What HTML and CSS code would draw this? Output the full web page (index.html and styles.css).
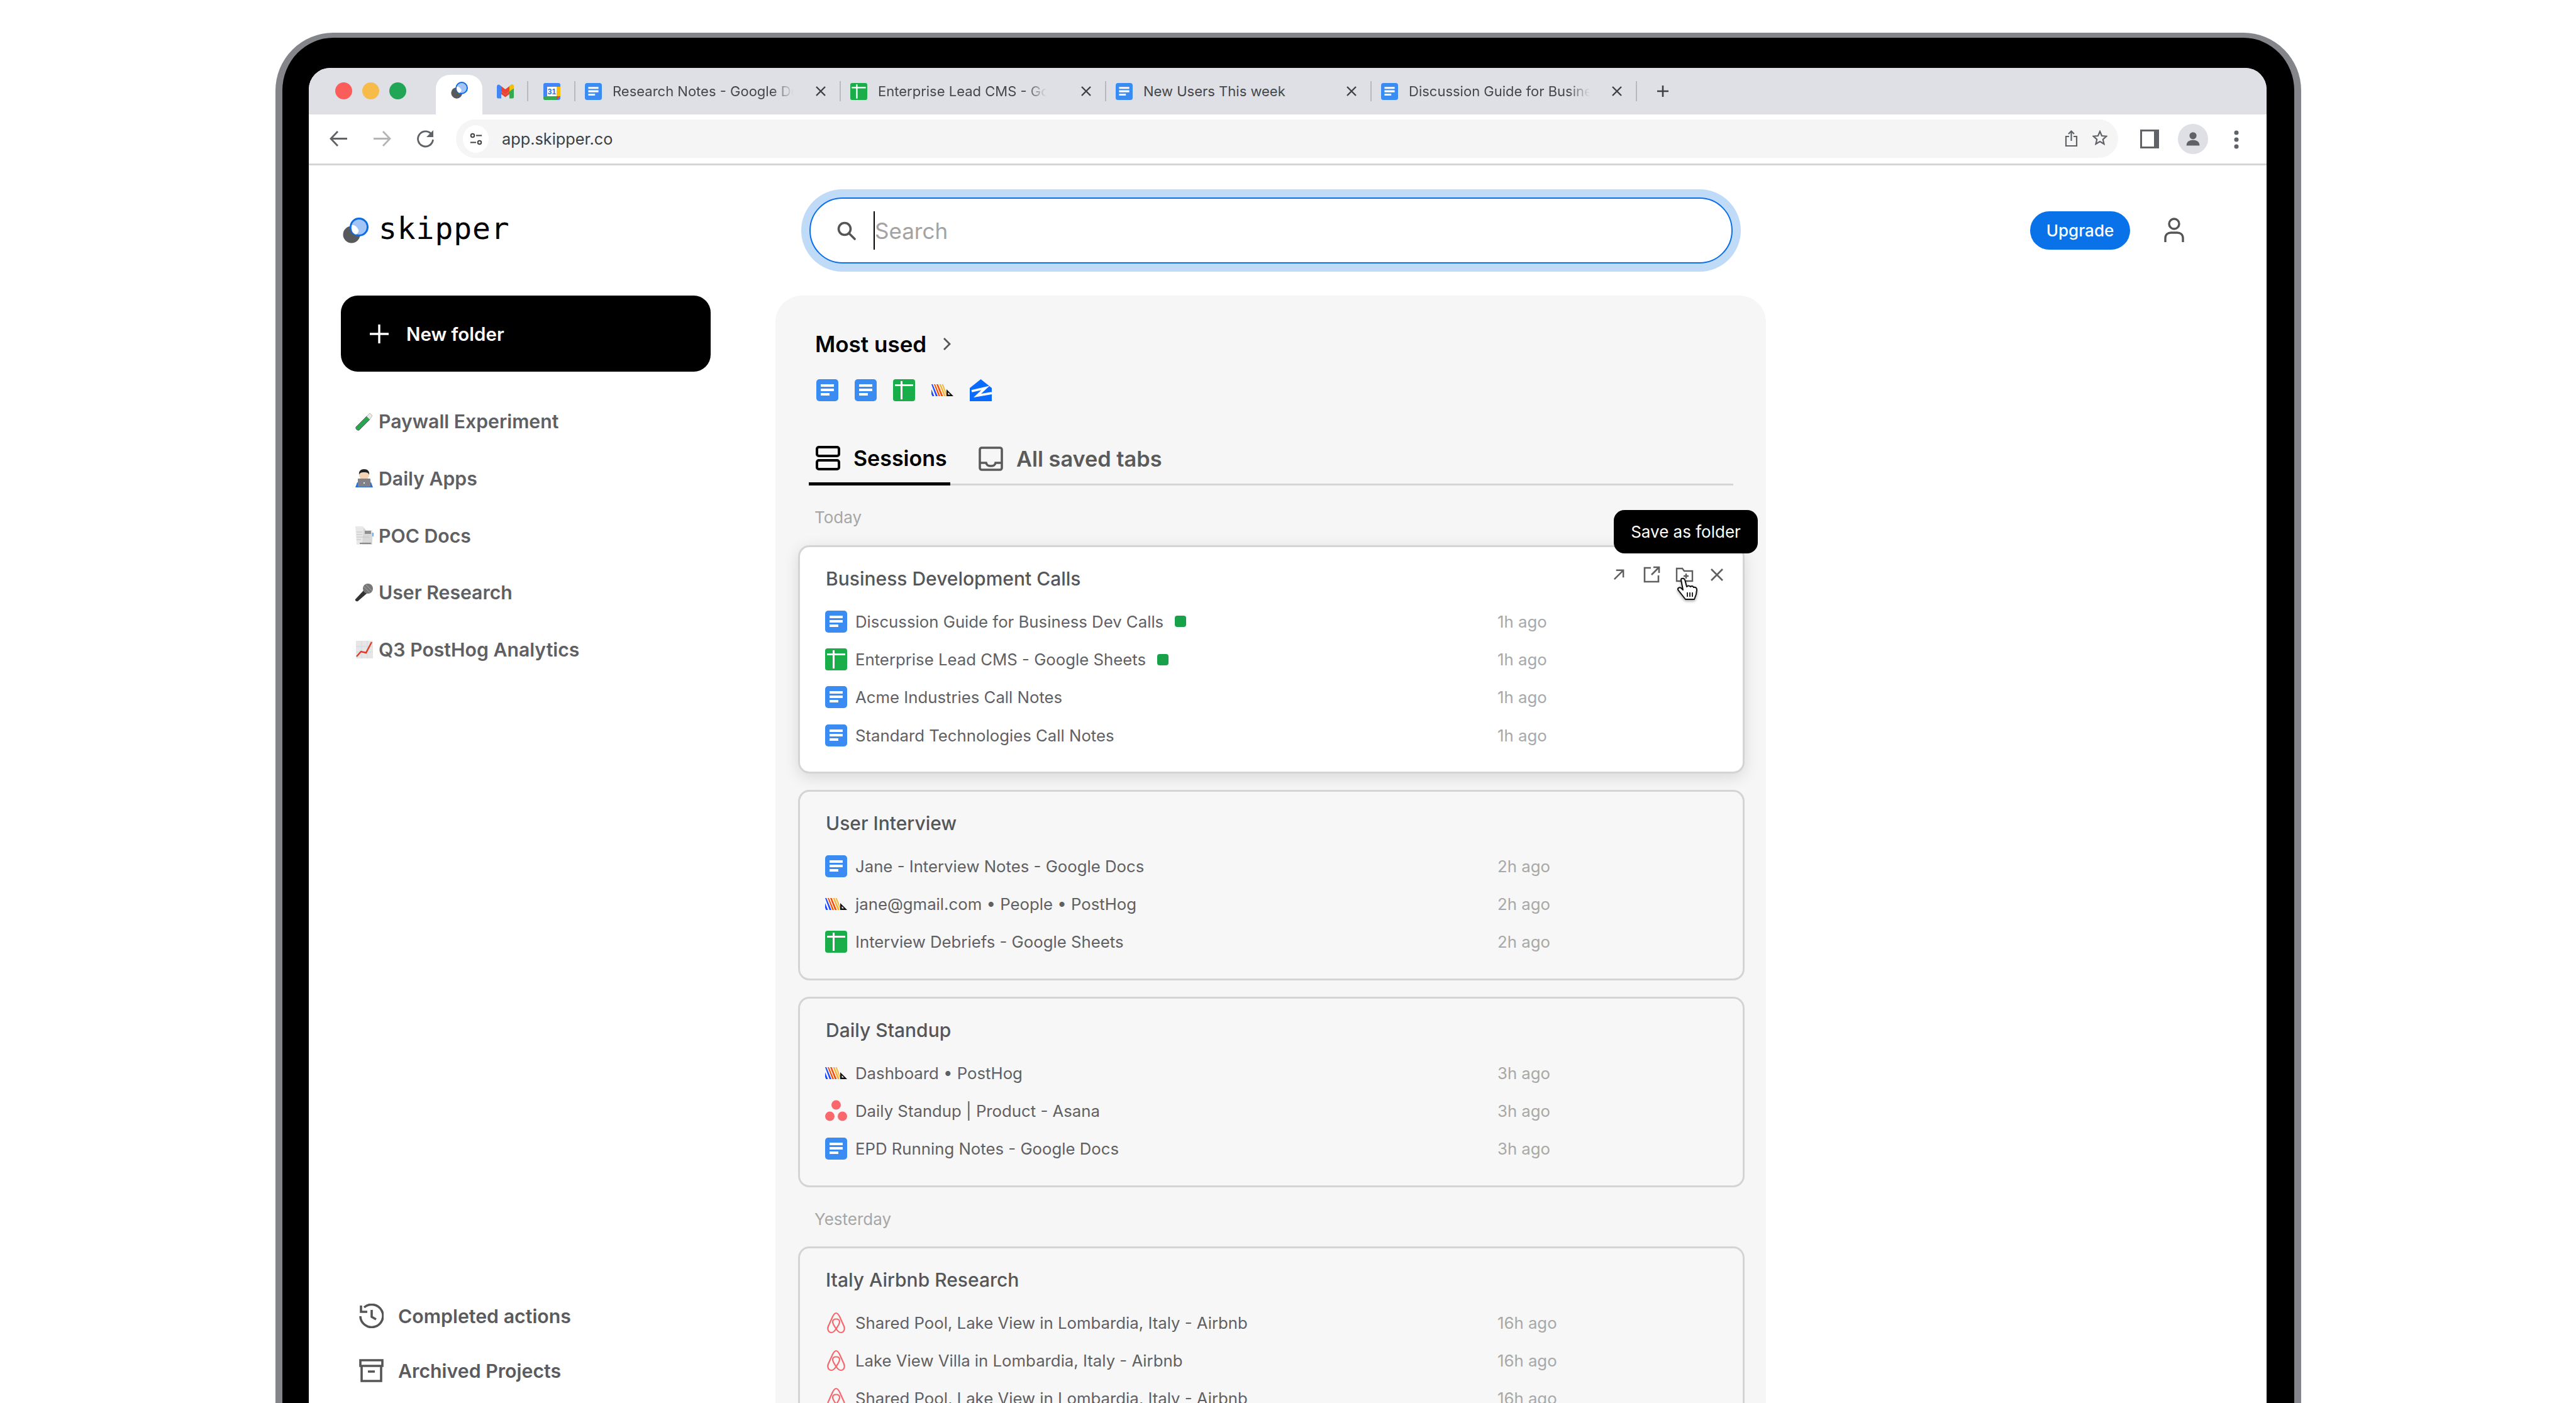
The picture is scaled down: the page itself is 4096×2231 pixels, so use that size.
FILE: index.html
```html
<!DOCTYPE html>
<html lang="en">
<head>
<meta charset="utf-8">
<title>Skipper</title>
<link rel="stylesheet" href="styles.css">
</head>
<body>
<svg class="defs" aria-hidden="true">
  <symbol id="docs" viewBox="0 0 35 35"><rect width="35" height="35" rx="5" fill="#3a8bf2"/><path d="M7 8h21v4H7zM7 15h21v4H7zM7 22h14v4H7z" fill="#fff"/></symbol>
  <symbol id="sheets" viewBox="0 0 35 35"><rect width="35" height="35" rx="4" fill="#19ae4a"/><path d="M3 8h29v3H3zM12 3h3v29h-3z" fill="#fff"/></symbol>
  <symbol id="posthog" viewBox="0 0 35 35"><path d="M0 8h2l8 19H7zM0 16l4.500 11H1.500L0 23.500z" fill="#1d4aff"/><path d="M4 8h2l8 19h-2.500zM8 8h2.500l8 19H15.500z" fill="#f54e00"/><path d="M12.500 8h2.500l8 19h-3zM16.500 8h2l7.500 19h-2z" fill="#f4b63a"/><path d="M24 16l11 11H24z" fill="#111"/><path d="M26.500 24.500h3.500l-3.500-3.500z" fill="#fff"/></symbol>
  <symbol id="zillow" viewBox="0 0 35 35"><path d="M17.500 0L35 14v21H0V14z" fill="#0a6cff"/><path d="M3 19l22-5-13 12 23-4" fill="none" stroke="#fff" stroke-width="3.800"/></symbol>
  <symbol id="asana" viewBox="0 0 35 35"><g fill="#f9686d"><circle cx="17.500" cy="8" r="7.500"/><circle cx="7.500" cy="26" r="7.500"/><circle cx="27.500" cy="26" r="7.500"/></g></symbol>
  <symbol id="airbnb" viewBox="0 0 35 35"><g fill="none" stroke="#f4686e" stroke-width="2.200"><path d="M17.500 2C15 2 13.800 4 12 7.500L5 23C3 28 5.500 33 10 33c3 0 5-2 7.500-6C20 31 22 33 25 33c4.500 0 7-5 5-10L23 7.500C21.200 4 20 2 17.500 2z"/><path d="M17.500 27c-3.500-5-5.500-8-5.500-11s2.500-4.500 5.500-4.500S23 13 23 16s-2 6-5.500 11z"/></g></symbol>
  <symbol id="skip" viewBox="0 0 41 41"><circle cx="14" cy="27" r="13.500" fill="#58595c"/><circle cx="26" cy="15" r="13.500" fill="#a3c4f6" stroke="#0b6ce6" stroke-width="3"/><path d="M14.500 12c4-1 9 3 11 9-1 3-2.500 5-4.500 6C15.500 26 12 18 14.500 12z" fill="#fff"/></symbol>
  <symbol id="close" viewBox="0 0 20 20"><path d="M3 3l14 14M17 3L3 17" fill="none" stroke="currentColor" stroke-width="2.400"/></symbol>
</svg>

<div class="device">
  <div class="screen">
    <div class="tabstrip">
      <div class="lights"><i class="light red"></i><i class="light amber"></i><i class="light green"></i></div>
      <div class="tab-active"><svg class="fav"><use href="#skip"/></svg></div>
      <div class="pin pin-gmail">
        <svg class="fav" viewBox="0 0 27 24"><path d="M0 7l13.500 10L27 7v4L13.500 21 0 11z" fill="#ea4335"/><path d="M0 4.500C0 1 3 0 5 2l2 1.500V23H2a2 2 0 0 1-2-2z" fill="#4285f4"/><path d="M27 4.500C27 1 24 0 22 2l-2 1.500V23h5a2 2 0 0 0 2-2z" fill="#34a853"/><path d="M20 3.500L22 2c2-2 5-1 5 2.500V7l-7 5z" fill="#fbbc04"/><path d="M7 3.500l6.500 5 6.500-5V12l-6.500 5L7 12z" fill="#ea4335"/></svg>
      </div>
      <div class="pin pin-cal">
        <svg class="fav-cal" viewBox="0 0 27 27"><rect width="27" height="27" rx="3" fill="#4285f4"/><rect x="6" y="6" width="15" height="15" fill="#fff"/><rect x="21" y="6" width="6" height="15" fill="#fbbc04"/><path d="M0 21h21v6H3a3 3 0 0 1-3-3z" fill="#34a853"/><path d="M21 21h6l-6 6z" fill="#ea4335"/><text x="13.500" y="18" text-anchor="middle" class="cal-num">31</text></svg>
      </div>
      <div class="tab"><svg class="fav"><use href="#docs"/></svg><span class="tab-title">Research Notes - Google Docs</span><svg class="tab-x"><use href="#close"/></svg></div>
      <div class="tab"><svg class="fav"><use href="#sheets"/></svg><span class="tab-title tab-title-short">Enterprise Lead CMS - Google Sheets</span><svg class="tab-x"><use href="#close"/></svg></div>
      <div class="tab"><svg class="fav"><use href="#docs"/></svg><span class="tab-title tab-title-plain">New Users This week</span><svg class="tab-x"><use href="#close"/></svg></div>
      <div class="tab"><svg class="fav"><use href="#docs"/></svg><span class="tab-title">Discussion Guide for Business Dev Calls</span><svg class="tab-x"><use href="#close"/></svg></div>
      <svg class="new-tab" viewBox="0 0 20 20"><path d="M10 1v18M1 10h18" fill="none" stroke="#3c4043" stroke-width="2.600"/></svg>
    </div>

    <div class="toolbar">
      <svg class="nav" viewBox="0 0 29 29"><path d="M28 14.500H3M13 3L2 14.500 13 26" fill="none" stroke="#5f6368" stroke-width="2.800"/></svg>
      <svg class="nav nav-gap" viewBox="0 0 29 29"><path d="M1 14.500h25M16 3l11 11.500L16 26" fill="none" stroke="#b4b5b7" stroke-width="2.800"/></svg>
      <svg class="nav nav-gap" viewBox="0 0 29 29"><path d="M25 9A12 12 0 1 0 26.500 16" fill="none" stroke="#5f6368" stroke-width="2.800"/><path d="M27 1v11H16z" fill="#5f6368"/></svg>
      <div class="omnibox">
        <span class="site">
          <svg class="site-icon" viewBox="0 0 24 24"><g fill="none" stroke="#444" stroke-width="2.200"><circle cx="6" cy="6" r="3"/><path d="M12 6h10M2 18h10"/><circle cx="18" cy="18" r="3"/></g></svg>
        </span>
        <span class="url">app.skipper.co</span>
        <svg class="omni-share" viewBox="0 0 21 27"><path d="M7 10H2v15h17V10h-5M10.500 17V2M6 6l4.500-4.500L15 6" fill="none" stroke="#5f6368" stroke-width="2.200"/></svg>
        <svg class="omni-star" viewBox="0 0 24 24"><path d="M12 2l3 7 7.500.7-5.700 5 1.700 7.300-6.500-3.900L5.500 22l1.700-7.300-5.700-5L9 9z" fill="none" stroke="#5f6368" stroke-width="2.200"/></svg>
      </div>
      <svg class="panel-btn" viewBox="0 0 30 30"><rect width="30" height="30" fill="#5f6368"/><rect x="3" y="3" width="19" height="24" fill="#fff"/></svg>
      <span class="avatar"><svg class="avatar-svg" viewBox="0 0 30 30"><circle cx="15" cy="9" r="6.500" fill="#5f6368"/><path d="M3 27c0-7 5-10 12-10s12 3 12 10z" fill="#5f6368"/></svg></span>
      <svg class="menu" viewBox="0 0 8 30"><g fill="#5f6368"><circle cx="4" cy="4" r="3.500"/><circle cx="4" cy="15" r="3.500"/><circle cx="4" cy="26" r="3.500"/></g></svg>
    </div>

    <div class="apphead">
      <div class="brand"><svg class="brand-mark"><use href="#skip"/></svg><span class="brand-name">skipper</span></div>
      <div class="search">
        <svg class="search-icon" viewBox="0 0 30 30"><circle cx="12" cy="12" r="9.500" fill="none" stroke="#555" stroke-width="3.600"/><path d="M19 19l9 9" stroke="#555" stroke-width="3.600" stroke-linecap="round"/></svg>
        <i class="caret"></i><span class="search-ph">Search</span>
      </div>
      <button class="upgrade">Upgrade</button>
      <svg class="user" viewBox="0 0 32 39"><circle cx="16" cy="10" r="8" fill="none" stroke="#555" stroke-width="3.400"/><path d="M2 39v-6c0-6 4-9 9-9h10c5 0 9 3 9 9v6" fill="none" stroke="#555" stroke-width="3.400"/></svg>
    </div>

    <div class="appbody">
      <aside class="sidebar">
        <button class="new-folder"><svg class="plus" viewBox="0 0 30 30"><path d="M15 0v30M0 15h30" fill="none" stroke="#fff" stroke-width="3.400"/></svg>New folder</button>
        <nav class="folders">
          <a class="folder">
            <svg class="emoji" viewBox="0 0 30 30"><path d="M2 24L19 7l5 5L7 29c-3 1-6-2-5-5z" fill="#22a84f" stroke="#666" stroke-width="1"/><path d="M19 7l5-5 4 4-4 6z" fill="#e9e9e9" stroke="#bbb"/></svg>
            Paywall Experiment</a>
          <a class="folder">
            <svg class="emoji" viewBox="0 0 30 30"><path d="M1 29l3-8h22l3 8z" fill="#2b6fd4"/><circle cx="15" cy="9" r="8" fill="#f2d3b5"/><path d="M7 9c-1-6 3-9 8-9s9 3 8 9c-1-3-3-4-8-4S8 6 7 9z" fill="#222"/><rect x="5" y="15" width="20" height="13" rx="1" fill="#808288"/><circle cx="15" cy="22" r="1.200" fill="#eee"/></svg>
            Daily Apps</a>
          <a class="folder">
            <svg class="emoji" viewBox="0 0 30 30"><path d="M1 0h12l5 6h10v23H3z" fill="#e8e8e8"/><path d="M14 2l7 8h7v19H12z" fill="#d8d8d8"/><path d="M16 7h10v5H16z" fill="#8f8f8f"/><path d="M3 9h9M3 13h9M3 17h20M3 21h7" stroke="#c2c2c2"/><path d="M8 27h18" stroke="#888" stroke-width="2"/><path d="M29 10v6" stroke="#6aaef5" stroke-width="2"/></svg>
            POC Docs</a>
          <a class="folder">
            <svg class="emoji" viewBox="0 0 30 30"><path d="M1 26L15 11l5 5L5 29c-2 1-5-1-4-3z" fill="#333"/><circle cx="21" cy="9" r="8" fill="#777"/><path d="M15 6l9 9M18 3l9 9" stroke="#aaa"/></svg>
            User Research</a>
          <a class="folder">
            <svg class="emoji" viewBox="0 0 30 30"><rect x="2" y="1" width="27" height="28" fill="#e6e6e6"/><path d="M2 10h27M2 19h27M11 1v28M20 1v28" stroke="#cfd8e6"/><path d="M3 26l7-8 8 2 9-17" fill="none" stroke="#e23a23" stroke-width="2.400"/></svg>
            Q3 PostHog Analytics</a>
        </nav>
        <div class="side-foot">
          <a class="foot-item"><svg class="foot-icon" viewBox="0 0 39 39"><path d="M8 6A18 18 0 1 1 2 20" fill="none" stroke="#555" stroke-width="3.600"/><path d="M3 3v10h10" fill="none" stroke="#555" stroke-width="3.600"/><path d="M20 10v11l7 4" fill="none" stroke="#555" stroke-width="3.600"/></svg>Completed actions</a>
          <a class="foot-item"><svg class="foot-icon" viewBox="0 0 39 39"><path d="M2 3h35v9H2zM4 12v24h31V12M14 21h11" fill="none" stroke="#555" stroke-width="3.600"/></svg>Archived Projects</a>
        </div>
      </aside>

      <main class="panel">
        <div class="most-head">Most used<svg class="chev" viewBox="0 0 13 20"><path d="M2 1l9 9-9 9" fill="none" stroke="#555" stroke-width="2.800"/></svg></div>
        <div class="most-icons">
          <svg class="ico"><use href="#docs"/></svg>
          <svg class="ico"><use href="#docs"/></svg>
          <svg class="ico"><use href="#sheets"/></svg>
          <svg class="ico"><use href="#posthog"/></svg>
          <svg class="ico"><use href="#zillow"/></svg>
        </div>
        <div class="tabs">
          <div class="ptab ptab-on"><svg class="ptab-icon" viewBox="0 0 39 39"><g fill="none" stroke="#000" stroke-width="4"><rect x="2" y="2" width="35" height="14" rx="3"/><rect x="2" y="23" width="35" height="14" rx="3"/></g></svg>Sessions</div>
          <div class="ptab"><svg class="ptab-icon" viewBox="0 0 39 39"><g fill="none" stroke="#5a5a5a" stroke-width="3.600"><rect x="2" y="2" width="35" height="35" rx="3"/><path d="M2 26h10c1 4 3 5 7.500 5s6.500-1 7.500-5h10"/></g></svg>All saved tabs</div>
        </div>

        <div class="day">Today</div>
        <section class="card card-hover">
          <h3 class="card-title">Business Development Calls</h3>
          <div class="row"><svg class="ico"><use href="#docs"/></svg><span class="name">Discussion Guide for Business Dev Calls<i class="live"></i></span><span class="time">1h ago</span></div>
          <div class="row"><svg class="ico"><use href="#sheets"/></svg><span class="name">Enterprise Lead CMS - Google Sheets<i class="live"></i></span><span class="time">1h ago</span></div>
          <div class="row"><svg class="ico"><use href="#docs"/></svg><span class="name">Acme Industries Call Notes</span><span class="time">1h ago</span></div>
          <div class="row"><svg class="ico"><use href="#docs"/></svg><span class="name">Standard Technologies Call Notes</span><span class="time">1h ago</span></div>
          <div class="actions">
            <svg class="act act-arrow" viewBox="0 0 20 20"><path d="M2 18L17 3M5 3h12v12" fill="none" stroke="#5f5f5f" stroke-width="2.600"/></svg>
            <svg class="act act-ext" viewBox="0 0 27 27"><path d="M12 3H2v22h22V15M13 14L25 2M16 2h9v9" fill="none" stroke="#5f5f5f" stroke-width="2.600"/></svg>
            <svg class="act act-folder" viewBox="0 0 29 24"><path d="M2 21V2h9l3 4h13v16H2zM17 10v8M13 14h8" fill="none" stroke="#5f5f5f" stroke-width="2.400"/></svg>
            <svg class="act act-close" viewBox="0 0 20 20"><path d="M1 1l18 18M19 1L1 19" fill="none" stroke="#5f5f5f" stroke-width="2.600"/></svg>
          </div>
          <div class="tooltip">Save as folder</div>
          <svg class="hand" viewBox="0 0 34 36"><path d="M7 4c0-3 5-3 6 0l3 11c2-2 4-2 6 0 2-2 4-1 5 1 3-1 5 1 5 4l-1 7-3 8H14L3 21c-3-3 1-6 4-4l3 3z" fill="#fff" stroke="#111" stroke-width="2" stroke-linejoin="round"/><path d="M17 24v7M21 24v7M25 24v7" stroke="#111" stroke-width="1.800"/></svg>
        </section>

        <section class="card">
          <h3 class="card-title">User Interview</h3>
          <div class="row"><svg class="ico"><use href="#docs"/></svg><span class="name">Jane - Interview Notes - Google Docs</span><span class="time">2h ago</span></div>
          <div class="row"><svg class="ico"><use href="#posthog"/></svg><span class="name">jane@gmail.com • People • PostHog</span><span class="time">2h ago</span></div>
          <div class="row"><svg class="ico"><use href="#sheets"/></svg><span class="name">Interview Debriefs - Google Sheets</span><span class="time">2h ago</span></div>
        </section>

        <section class="card">
          <h3 class="card-title">Daily Standup</h3>
          <div class="row"><svg class="ico"><use href="#posthog"/></svg><span class="name">Dashboard • PostHog</span><span class="time">3h ago</span></div>
          <div class="row"><svg class="ico"><use href="#asana"/></svg><span class="name">Daily Standup | Product - Asana</span><span class="time">3h ago</span></div>
          <div class="row"><svg class="ico"><use href="#docs"/></svg><span class="name">EPD Running Notes - Google Docs</span><span class="time">3h ago</span></div>
        </section>

        <div class="day day-next">Yesterday</div>
        <section class="card">
          <h3 class="card-title">Italy Airbnb Research</h3>
          <div class="row"><svg class="ico"><use href="#airbnb"/></svg><span class="name">Shared Pool, Lake View in Lombardia, Italy - Airbnb</span><span class="time">16h ago</span></div>
          <div class="row"><svg class="ico"><use href="#airbnb"/></svg><span class="name">Lake View Villa in Lombardia, Italy - Airbnb</span><span class="time">16h ago</span></div>
          <div class="row"><svg class="ico"><use href="#airbnb"/></svg><span class="name">Shared Pool, Lake View in Lombardia, Italy - Airbnb</span><span class="time">16h ago</span></div>
        </section>
      </main>
    </div>
  </div>
</div>
</body>
</html>
```
FILE: styles.css
```css
* { box-sizing: border-box; }
html, body { margin: 0; padding: 0; }
body { width: 4096px; height: 2231px; overflow: hidden; background: #fff; font-family: "Inter", "Liberation Sans", sans-serif; padding-top: 52px; }
.defs { display: none; }

.device { width: 3221px; height: 2300px; margin-left: 438px; background: #000; border: 11px solid #84858a; border-top-width: 8px; border-radius: 92px 92px 0 0; padding: 48px 44px 0 42px; }
.screen { height: 2230px; background: #fff; border-radius: 34px 34px 0 0; overflow: hidden; }

/* tab strip */
.tabstrip { height: 74px; background: #dfe0e5; display: flex; align-items: center; padding-left: 42px; }
.lights { display: flex; gap: 16px; margin-bottom: 1px; }
.light { width: 27px; height: 27px; border-radius: 50%; display: block; }
.red { background: #fb5d5b; }
.amber { background: #f7bb4a; }
.green { background: #21a557; }
.tab-active { width: 74px; height: 63px; margin-left: 47px; align-self: flex-end; background: #fff; border-radius: 22px 22px 0 0; display: flex; align-items: center; justify-content: center; padding-bottom: 14px; }
.fav { width: 27px; height: 27px; flex: none; }
.pin { height: 32px; display: flex; align-items: center; border-right: 2px solid #b9babd; }
.pin-gmail { width: 73px; padding-left: 23px; }
.pin-cal { width: 75px; padding-left: 24px; }
.fav-cal { width: 27px; height: 27px; }
.cal-num { font-family: "Liberation Sans Narrow", "Liberation Sans", sans-serif; font-size: 12px; font-weight: 700; fill: #1a73e8; }
.tab { width: 422px; height: 32px; display: flex; align-items: center; padding-left: 15px; border-right: 2px solid #b9babd; }
.tab-title { width: 288px; margin-left: 17px; font-size: 22px; color: #45474a; white-space: nowrap; overflow: hidden; -webkit-mask-image: linear-gradient(90deg, #000 88%, transparent 100%); mask-image: linear-gradient(90deg, #000 88%, transparent 100%); }
.tab-title-short { width: 268px; margin-right: 20px; }
.tab-title-plain { -webkit-mask-image: none; mask-image: none; }
.tab-x { width: 20px; height: 20px; margin-left: 33px; color: #3c4043; flex: none; }
.new-tab { width: 20px; height: 20px; margin-left: 31px; }

/* toolbar */
.toolbar { height: 81px; padding: 8px 0 0 33px; display: flex; align-items: flex-start; border-bottom: 3px solid #d5d5d5; }
.nav { width: 29px; height: 29px; margin-top: 16px; flex: none; }
.nav-gap { margin-left: 40px; }
.omnibox { width: 2643px; height: 61px; margin-left: 34px; background: #f5f5f5; border-radius: 31px; display: flex; align-items: center; padding-left: 11px; flex: none; }
.site { width: 41px; height: 44px; border-radius: 50%; background: #fff; display: flex; align-items: center; justify-content: center; flex: none; }
.site-icon { width: 22px; height: 24px; }
.url { margin-left: 21px; font-size: 25.300px; color: #3c4043; }
.omni-share { width: 21px; height: 27px; margin-left: auto; }
.omni-star { width: 24px; height: 24px; margin-left: 23px; margin-right: 17px; margin-bottom: 4px; }
.panel-btn { width: 30px; height: 30px; margin-left: 35px; margin-top: 16px; flex: none; }
.avatar { width: 48px; height: 48px; margin-left: 30px; margin-top: 7px; border-radius: 50%; background: #dfe0e5; display: flex; align-items: center; justify-content: center; flex: none; }
.avatar-svg { width: 26px; height: 30px; }
.menu { width: 8px; height: 30px; margin-left: 41px; margin-top: 17px; flex: none; }

/* header */
.apphead { height: 207px; display: flex; align-items: center; }
.brand { width: 796px; padding-left: 54px; display: flex; align-items: center; flex: none; }
.brand-mark { width: 41px; height: 41px; flex: none; }
.brand-name { margin-left: 16px; font-family: "DejaVu Sans Mono", monospace; font-size: 48px; line-height: 1; letter-spacing: .9px; color: #000; position: relative; top: -4px; }
.search { width: 1468px; height: 105px; border: 2px solid #0a6fe8; border-radius: 53px; box-shadow: 0 0 0 13px #bfdbf8; background: #fff; display: flex; align-items: center; padding-left: 42px; flex: none; }
.search-icon { width: 30px; height: 30px; flex: none; }
.caret { width: 2px; height: 61px; background: #000; margin-left: 28px; display: block; }
.search-ph { font-size: 35px; color: #a3a3a3; }
.upgrade { width: 159px; height: 61px; margin-left: 473px; border: 0; border-radius: 31px; background: #0a72e8; color: #fff; font: 500 26px "Inter", sans-serif; padding: 0; flex: none; }
.user { width: 32px; height: 39px; margin-left: 54px; flex: none; margin-bottom: 2px; }

/* body */
.appbody { height: 1780px; display: flex; align-items: flex-start; }
.sidebar { width: 742px; height: 1761px; padding-left: 51px; display: flex; flex-direction: column; flex: none; }
.new-folder { width: 588px; height: 121px; background: #000; border: 0; border-radius: 27px; color: #fff; font: 600 29.500px "Inter", sans-serif; display: flex; align-items: center; padding: 0 0 0 46px; }
.plus { width: 30px; height: 30px; margin-right: 28px; }
.folders { margin-top: 34px; }
.folder { height: 90.700px; padding-left: 22px; display: flex; align-items: center; font-size: 30.200px; font-weight: 600; color: #5f6063; }
.emoji { width: 30px; height: 30px; margin-right: 8px; flex: none; }
.side-foot { margin-top: auto; padding: 0 0 8px 29px; }
.foot-item { height: 87px; display: flex; align-items: center; font-size: 30.300px; font-weight: 600; color: #5a5b5e; }
.foot-icon { width: 39px; height: 39px; margin-right: 23px; flex: none; }

.panel { width: 1575px; height: 1780px; background: #f6f6f6; border-radius: 42px 42px 0 0; padding: 49px 34px 0 36px; overflow: hidden; flex: none; }
.most-head { height: 56px; padding-left: 27px; display: flex; align-items: center; font-size: 35px; font-weight: 600; color: #000; }
.chev { width: 13px; height: 20px; margin-left: 26px; }
.most-icons { margin-top: 28px; padding-left: 29px; display: flex; gap: 26px; }
.ico { width: 35px; height: 35px; flex: none; display: block; }
.tabs { height: 82px; margin: 52px 18px 0 17px; display: flex; border-bottom: 3px solid #d5d5d5; }
.ptab { height: 82px; display: flex; align-items: center; padding-bottom: 4px; font-size: 34.300px; font-weight: 600; color: #5a5a5a; margin-left: 45px; }
.ptab-on { width: 225px; margin-left: 0; padding-left: 11px; padding-bottom: 0; color: #000; border-bottom: 5px solid #000; font-size: 34px; }
.ptab-icon { width: 39px; height: 39px; margin-right: 21px; flex: none; }

.day { height: 40px; margin-top: 31px; margin-bottom: 24px; padding-left: 26px; font-size: 26px; line-height: 40px; color: #a6a6a6; }
.day-next { margin-top: 31px; margin-bottom: 23px; }
.card { position: relative; border: 3px solid #d4d4d4; border-radius: 18px; padding: 25px 0 0 40px; margin-bottom: 26px; background: #f7f7f7; }
.card:not(.card-hover) { height: 303px; }
.card-hover { height: 363px; background: #fff; box-shadow: 0 6px 24px rgba(0,0,0,.12); }
.card-title { height: 50px; margin: 0 0 13px; font-size: 30px; line-height: 50px; font-weight: 500; color: #555659; padding-left: 1px; }
.row { height: 60.400px; display: flex; align-items: center; }
.name { width: 1021px; margin-left: 13px; flex: none; font-size: 25.750px; color: #5f6063; display: flex; align-items: center; white-space: nowrap; }
.live { width: 18px; height: 18px; margin-left: 18px; border-radius: 4px; background: #17a24a; display: block; }
.time { font-size: 25.750px; color: #a8a8a8; white-space: nowrap; }

.actions { position: absolute; left: 1293px; top: 30px; display: flex; align-items: center; }
.act { display: block; flex: none; }
.act-arrow { width: 19px; height: 19px; }
.act-ext { width: 27px; height: 27px; margin-left: 29px; }
.act-folder { width: 29px; height: 24px; margin-left: 24px; }
.act-close { width: 20px; height: 20px; margin-left: 27px; }
.tooltip { position: absolute; left: 1294px; top: -59px; width: 229px; height: 69px; background: #000; color: #fff; border-radius: 17px; font-size: 26px; display: flex; align-items: center; justify-content: center; z-index: 2; }
.hand { position: absolute; left: 1394px; top: 48px; width: 34px; height: 36px; filter: drop-shadow(0 2px 2px rgba(0,0,0,.35)); }
```
